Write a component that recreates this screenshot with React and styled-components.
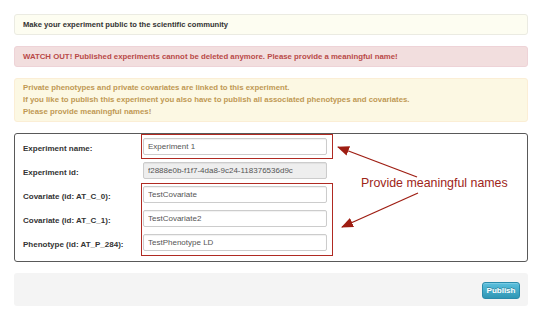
import React from "react";
import styled, { createGlobalStyle } from "styled-components";

const Global = createGlobalStyle`
  html, body { margin: 0; padding: 0; background: #fff; }
  body { font-family: "Liberation Sans", Helvetica, Arial, sans-serif; color: #333; }
  * { box-sizing: border-box; }
`;

const Page = styled.div`
  width: 545px;
  padding: 14px 17px 0 14px;
  display: flex;
  flex-direction: column;
  gap: 11px;
`;

const tones = {
  plain: { bg: "#fdfdf1", border: "#ebebe2", color: "#333" },
  danger: { bg: "#f2dede", border: "#eed3d7", color: "#b94a48" },
  warning: { bg: "#fcf8e3", border: "#fbeed5", color: "#c09853" },
};

const Alert = styled.div`
  background: ${(p) => tones[p.$tone].bg};
  border: 1px solid ${(p) => tones[p.$tone].border};
  color: ${(p) => tones[p.$tone].color};
  border-radius: 3px;
  padding: ${(p) => p.$pad || "4px 8px"};
  font-weight: bold;
  font-size: ${(p) => p.$size || "7.8px"};
  line-height: 11px;
`;

const Line = styled.div`
  line-height: 12px;
`;

const FormBox = styled.div`
  position: relative;
  border: 1px solid #595959;
  border-radius: 3px;
  padding: 4px 8px 10px 8px;
  display: flex;
  flex-direction: column;
  gap: 7px;
`;

const Row = styled.div`
  display: flex;
  align-items: center;
  height: 17px;
`;

const Label = styled.label`
  width: 120px;
  font-size: 8px;
  font-weight: bold;
  color: #333;
  margin-top: 4px;
`;

const Field = styled.input`
  width: 184px;
  height: 17px;
  border: 1px solid #ccc;
  border-radius: 2px;
  padding: 0 4px;
  font-family: "Liberation Sans", Helvetica, Arial, sans-serif;
  font-size: 8px;
  color: #555;
  background: ${(p) => (p.disabled ? "#eee" : "#fff")};
  box-shadow: inset 0 1px 1px rgba(0, 0, 0, 0.06);
  outline: none;
`;

const Highlight = styled.div`
  position: absolute;
  left: 126px;
  top: ${(p) => p.$top}px;
  width: 192px;
  height: ${(p) => p.$h}px;
  border: 1.5px solid #b02a22;
  pointer-events: none;
`;

const ArrowLayer = styled.svg`
  position: absolute;
  left: 0;
  top: 0;
  width: 512px;
  height: 127px;
  pointer-events: none;
  overflow: visible;
`;

const Callout = styled.span`
  position: absolute;
  left: 346px;
  top: 42px;
  font-size: 12.4px;
  line-height: 14px;
  color: #9e2519;
  white-space: nowrap;
`;

const Footer = styled.div`
  background: #f4f4f4;
  border-radius: 3px;
  padding: 9px 8px 7px 8px;
  display: flex;
  justify-content: flex-end;
`;

const Button = styled.button`
  height: 17px;
  width: 38px;
  padding: 0;
  border: 1px solid #2a8bab;
  border-radius: 3px;
  background: linear-gradient(#5bc0de, #2f96b4);
  color: #fff;
  font-family: "Liberation Sans", Helvetica, Arial, sans-serif;
  font-size: 8px;
  font-weight: bold;
  text-shadow: 0 -1px 0 rgba(0, 0, 0, 0.25);
  box-shadow: inset 0 1px 0 rgba(255, 255, 255, 0.2);
`;

const rows = [
  { label: "Experiment name:", value: "Experiment 1" },
  { label: "Experiment id:", value: "f2888e0b-f1f7-4da8-9c24-118376536d9c", disabled: true },
  { label: "Covariate (id: AT_C_0):", value: "TestCovariate" },
  { label: "Covariate (id: AT_C_1):", value: "TestCovariate2" },
  { label: "Phenotype (id: AT_P_284):", value: "TestPhenotype LD" },
];

export default function App() {
  return (
    <>
      <Global />
      <Page>
        <Alert $tone="plain" $size="7.6px" $pad="4px 8px">
          Make your experiment public to the scientific community
        </Alert>
        <Alert $tone="danger" $pad="4px 8px">
          WATCH OUT! Published experiments cannot be deleted anymore. Please provide a meaningful name!
        </Alert>
        <Alert $tone="warning" $pad="3px 8px">
          <Line>Private phenotypes and private covariates are linked to this experiment.</Line>
          <Line>If you like to publish this experiment you also have to publish all associated phenotypes and covariates.</Line>
          <Line>Please provide meaningful names!</Line>
        </Alert>
        <FormBox>
          {rows.map((r) => (
            <Row key={r.label}>
              <Label>{r.label}</Label>
              <Field readOnly defaultValue={r.value} disabled={r.disabled} />
            </Row>
          ))}
          <Highlight $top={0} $h={25} />
          <Highlight $top={49} $h={73} />
          <ArrowLayer viewBox="0 0 512 127">
            <defs>
              <marker id="head" viewBox="0 0 12 10" refX="11" refY="5" markerWidth="12" markerHeight="10" markerUnits="userSpaceOnUse" orient="auto">
                <path d="M0 0 L12 5 L0 10 Z" fill="#9e1d12" />
              </marker>
            </defs>
            <line x1="402" y1="43" x2="323" y2="13" stroke="#9e1d12" strokeWidth="1.3" markerEnd="url(#head)" />
            <line x1="403" y1="59" x2="327" y2="93" stroke="#9e1d12" strokeWidth="1.3" markerEnd="url(#head)" />
          </ArrowLayer>
          <Callout>Provide meaningful names</Callout>
        </FormBox>
        <Footer>
          <Button>Publish</Button>
        </Footer>
      </Page>
    </>
  );
}
